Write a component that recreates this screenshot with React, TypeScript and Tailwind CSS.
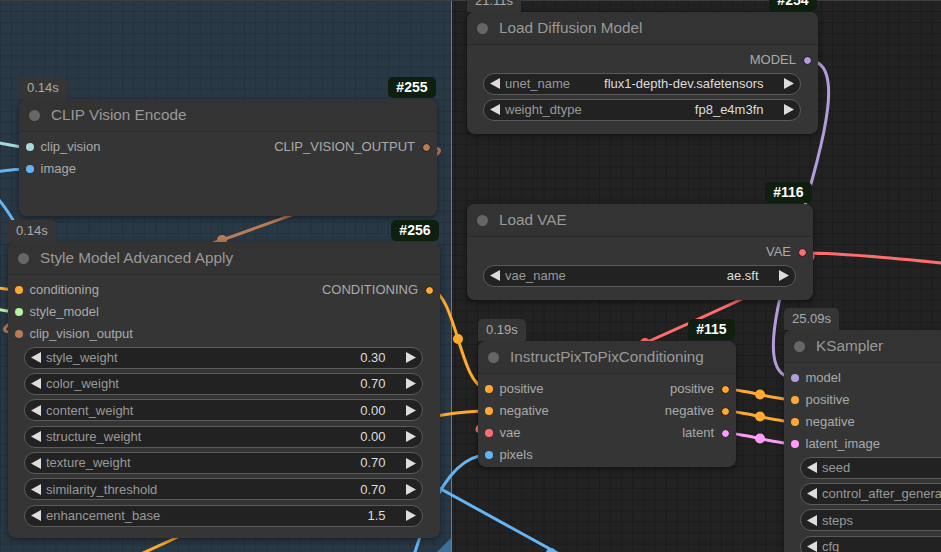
import React from 'react';

type Pt = [number, number];

interface Slot {
  name: string;
  dot: string;
}

interface Widget {
  label: string;
  value?: string;
}

interface NodeProps {
  title: string;
  box: string;
  time?: string;
  id?: string;
  inputs?: Slot[];
  outputs?: Slot[];
  widgets?: Widget[];
}

// LiteGraph style link: horizontal tangents, control distance = 1/4 of the length
const spline = (a: Pt, b: Pt) => {
  const d = Math.hypot(b[0] - a[0], b[1] - a[1]) * 0.25;
  return `M${a[0]} ${a[1]} C${a[0] + d} ${a[1]} ${b[0] - d} ${b[1]} ${b[0]} ${b[1]}`;
};

const links: { a: Pt; b: Pt; color: string; marker?: boolean }[] = [
  { a: [426, 147], b: [18, 333], color: '#b97c56', marker: true },
  { a: [428, 289], b: [488, 389], color: '#ffa931', marker: true },
  { a: [807, 60], b: [795, 378], color: '#b39ddb', marker: true },
  { a: [802, 253], b: [488, 433], color: '#ff6e6e', marker: true },
  { a: [802, 253], b: [1150, 280], color: '#ff6e6e' },
  { a: [725, 389], b: [795, 400], color: '#ffa931', marker: true },
  { a: [725, 411], b: [795, 422], color: '#ffa931', marker: true },
  { a: [725, 433], b: [795, 444], color: '#ff9cf9', marker: true },
  { a: [300, 800], b: [488, 455], color: '#64b5f6' },
];

// links whose other end lies off screen
const strays: { d: string; color: string }[] = [
  { d: 'M-60 125 C-20 135 0 147 30 147', color: '#a8dadc' },
  { d: 'M-60 185 C-20 175 0 169 30 169', color: '#64b5f6' },
  { d: 'M-8 192 C0 200 8 210 20 232', color: '#64b5f6' },
  { d: 'M-60 280 C-20 283 0 290 18 290', color: '#ffa931' },
  { d: 'M-60 300 C-20 303 0 312 18 312', color: '#b5f5a3' },
  { d: 'M380 422 C440 418 450 411 488 411', color: '#ffa931' },
  { d: 'M330 428 L570 560', color: '#64b5f6' },
  { d: 'M130 559 L180 536', color: '#ffa931' },
];

const Arrow = ({ dir }: { dir: 'l' | 'r' }) => (
  <svg width="10" height="11" viewBox="0 0 10 11" className="shrink-0">
    <path d={dir === 'l' ? 'M0 5.5 L10 0 L10 11 Z' : 'M0 0 L10 5.5 L0 11 Z'} fill="#dddddd" />
  </svg>
);

const WidgetRow = ({ label, value }: Widget) => (
  <div className="flex h-[22px] shrink-0 items-center rounded-full border border-[#5a5a5a] bg-[#222] px-[6px] text-[13px]">
    <Arrow dir="l" />
    <span className="ml-[5px] whitespace-nowrap text-[#999]">{label}</span>
    <span className="ml-auto whitespace-nowrap text-[#ddd]">{value}</span>
    <span className="ml-[20px]">
      <Arrow dir="r" />
    </span>
  </div>
);

const Node: React.FC<NodeProps> = ({ title, box, time, id, inputs = [], outputs = [], widgets = [] }) => (
  <div className={`absolute ${box}`}>
    {time && (
      <div className="absolute bottom-full left-0 h-[22px] rounded-t-[5px] bg-[#353535] px-[8px] text-[13px] leading-[22px] text-[#aaa]">
        {time}
      </div>
    )}
    {id && (
      <div className="absolute bottom-[calc(100%+1px)] right-[1.5px] h-[21px] rounded-[5px] bg-[#0e1e0f] px-[8px] text-[14px] font-bold leading-[21px] text-white">
        {id}
      </div>
    )}
    <div className="flex h-full flex-col overflow-hidden rounded-[8px] bg-[#353535] shadow-[0_2px_6px_rgba(0,0,0,0.45)]">
      <div className="flex h-[33px] shrink-0 items-center border-b border-[#2b2b2b] bg-[#333] pl-[10px]">
        <span className="h-[11px] w-[11px] rounded-full bg-[#666]" />
        <span className="ml-[11px] whitespace-nowrap text-[15.3px] text-[#999]">{title}</span>
      </div>
      <div className="flex pt-[4px] text-[13px] text-[#aaa]">
        <div className="flex flex-col">
          {inputs.map((s) => (
            <div key={s.name} className="flex h-[22px] items-center pl-[6.5px]">
              <span className={`h-[8px] w-[8px] rounded-full ${s.dot}`} />
              <span className="ml-[7px] whitespace-nowrap">{s.name}</span>
            </div>
          ))}
        </div>
        <div className="ml-auto flex flex-col items-end">
          {outputs.map((s) => (
            <div key={s.name} className="flex h-[22px] items-center pr-[6px]">
              <span className="mr-[7px] whitespace-nowrap">{s.name}</span>
              <span className={`h-[9px] w-[9px] rounded-full border border-[#151515] ${s.dot}`} />
            </div>
          ))}
        </div>
      </div>
      {widgets.length > 0 && (
        <div className="mt-[1.5px] flex flex-col gap-[4.4px] pl-[16px] pr-[17.5px]">
          {widgets.map((w) => (
            <WidgetRow key={w.label} {...w} />
          ))}
        </div>
      )}
    </div>
  </div>
);

export default function App() {
  return (
    <div className="relative h-[552px] w-[941px] overflow-hidden bg-[#222] bg-[linear-gradient(#1b1b1b_1px,transparent_1px),linear-gradient(90deg,#1b1b1b_1px,transparent_1px)] bg-size-[11.1px_11.1px] font-['Liberation_Sans',Arial,sans-serif]">
      {/* group */}
      <div className="absolute left-0 top-0 h-[552px] w-[452px] border-r border-[#3f88c6] bg-[#293845] bg-[linear-gradient(#24313d_1px,transparent_1px),linear-gradient(90deg,#24313d_1px,transparent_1px)] bg-size-[11.1px_11.1px]">
        <svg className="absolute bottom-0 right-0" width="14" height="14" viewBox="0 0 14 14">
          <path d="M14 0 L14 14 L0 14 Z" fill="#3b6f98" />
        </svg>
      </div>
      <div className="absolute left-0 right-0 top-0 h-px bg-[#3e3e3e]" />

      {/* links */}
      <svg className="pointer-events-none absolute inset-0" width="941" height="552">
        {strays.map((l, i) => (
          <path key={`s${i}`} d={l.d} stroke={l.color} strokeWidth="3" fill="none" />
        ))}
        {links.map((l, i) => (
          <g key={`l${i}`}>
            <path d={spline(l.a, l.b)} stroke={l.color} strokeWidth="3" fill="none" />
            {l.marker && <circle cx={(l.a[0] + l.b[0]) / 2} cy={(l.a[1] + l.b[1]) / 2} r="5" fill={l.color} />}
          </g>
        ))}
        <circle cx="551" cy="553" r="5" fill="#64b5f6" />
      </svg>

      <Node
        title="Load Diffusion Model"
        box="left-[467px] top-[12px] w-[351px] h-[122px]"
        time="21.11s"
        id="#254"
        outputs={[{ name: 'MODEL', dot: 'bg-[#b39ddb]' }]}
        widgets={[
          { label: 'unet_name', value: 'flux1-depth-dev.safetensors' },
          { label: 'weight_dtype', value: 'fp8_e4m3fn' },
        ]}
      />
      <Node
        title="CLIP Vision Encode"
        box="left-[19px] top-[99px] w-[418px] h-[117px]"
        time="0.14s"
        id="#255"
        inputs={[
          { name: 'clip_vision', dot: 'bg-[#a8dadc]' },
          { name: 'image', dot: 'bg-[#64b5f6]' },
        ]}
        outputs={[{ name: 'CLIP_VISION_OUTPUT', dot: 'bg-[#b97c56]' }]}
      />
      <Node
        title="Style Model Advanced Apply"
        box="left-[8px] top-[242px] w-[432px] h-[296px]"
        time="0.14s"
        id="#256"
        inputs={[
          { name: 'conditioning', dot: 'bg-[#ffa931]' },
          { name: 'style_model', dot: 'bg-[#b5f5a3]' },
          { name: 'clip_vision_output', dot: 'bg-[#b97c56]' },
        ]}
        outputs={[{ name: 'CONDITIONING', dot: 'bg-[#ffa931]' }]}
        widgets={[
          { label: 'style_weight', value: '0.30' },
          { label: 'color_weight', value: '0.70' },
          { label: 'content_weight', value: '0.00' },
          { label: 'structure_weight', value: '0.00' },
          { label: 'texture_weight', value: '0.70' },
          { label: 'similarity_threshold', value: '0.70' },
          { label: 'enhancement_base', value: '1.5' },
        ]}
      />
      <Node
        title="Load VAE"
        box="left-[467px] top-[204px] w-[346px] h-[96px]"
        id="#116"
        outputs={[{ name: 'VAE', dot: 'bg-[#ff6e6e]' }]}
        widgets={[{ label: 'vae_name', value: 'ae.sft' }]}
      />
      <Node
        title="InstructPixToPixConditioning"
        box="left-[478px] top-[341px] w-[258px] h-[126px]"
        time="0.19s"
        id="#115"
        inputs={[
          { name: 'positive', dot: 'bg-[#ffa931]' },
          { name: 'negative', dot: 'bg-[#ffa931]' },
          { name: 'vae', dot: 'bg-[#ff6e6e]' },
          { name: 'pixels', dot: 'bg-[#64b5f6]' },
        ]}
        outputs={[
          { name: 'positive', dot: 'bg-[#ffa931]' },
          { name: 'negative', dot: 'bg-[#ffa931]' },
          { name: 'latent', dot: 'bg-[#ff9cf9]' },
        ]}
      />
      <Node
        title="KSampler"
        box="left-[784px] top-[330px] w-[320px] h-[260px]"
        time="25.09s"
        inputs={[
          { name: 'model', dot: 'bg-[#b39ddb]' },
          { name: 'positive', dot: 'bg-[#ffa931]' },
          { name: 'negative', dot: 'bg-[#ffa931]' },
          { name: 'latent_image', dot: 'bg-[#ff9cf9]' },
        ]}
        widgets={[
          { label: 'seed' },
          { label: 'control_after_generate' },
          { label: 'steps' },
          { label: 'cfg' },
        ]}
      />
    </div>
  );
}
